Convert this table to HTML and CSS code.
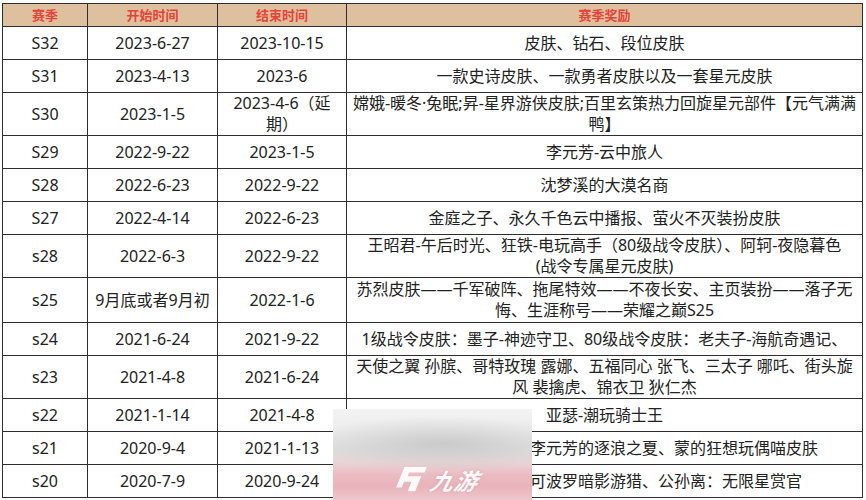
FILE: index.html
```html
<!DOCTYPE html>
<html lang="zh-CN">
<head>
<meta charset="utf-8">
<title>赛季时间表</title>
<link rel="stylesheet" href="styles.css">
</head>
<body>
<div class="page">
  <table class="seasons">
    <colgroup>
      <col class="c1"><col class="c2"><col class="c3"><col class="c4">
    </colgroup>
    <thead>
      <tr class="head"><th>赛季</th><th>开始时间</th><th>结束时间</th><th>赛季奖励</th></tr>
    </thead>
    <tbody>
      <tr><td>S32</td><td>2023-6-27</td><td>2023-10-15</td><td>皮肤、钻石、段位皮肤</td></tr>
      <tr><td>S31</td><td>2023-4-13</td><td>2023-6</td><td>一款史诗皮肤、一款勇者皮肤以及一套星元皮肤</td></tr>
      <tr class="two"><td>S30</td><td>2023-1-5</td><td>2023-4-6（延<br>期）</td><td>嫦娥-暖冬·兔眠;昇-星界游侠皮肤;百里玄策热力回旋星元部件【元气满满<br>鸭】</td></tr>
      <tr><td>S29</td><td>2022-9-22</td><td>2023-1-5</td><td>李元芳-云中旅人</td></tr>
      <tr><td>S28</td><td>2022-6-23</td><td>2022-9-22</td><td>沈梦溪的大漠名商</td></tr>
      <tr><td>S27</td><td>2022-4-14</td><td>2022-6-23</td><td>金庭之子、永久千色云中播报、萤火不灭装扮皮肤</td></tr>
      <tr class="two"><td>s28</td><td>2022-6-3</td><td>2022-9-22</td><td>王昭君-午后时光、狂铁-电玩高手（80级战令皮肤）、阿轲-夜隐暮色<br>(战令专属星元皮肤)</td></tr>
      <tr class="two tall"><td>s25</td><td>9月底或者9月初</td><td>2022-1-6</td><td>苏烈皮肤——千军破阵、拖尾特效——不夜长安、主页装扮——落子无<br>悔、生涯称号——荣耀之巅S25</td></tr>
      <tr><td>s24</td><td>2021-6-24</td><td>2021-9-22</td><td>1级战令皮肤：墨子-神迹守卫、80级战令皮肤：老夫子-海航奇遇记、</td></tr>
      <tr class="two"><td>s23</td><td>2021-4-8</td><td>2021-6-24</td><td>天使之翼 孙膑、哥特玫瑰 露娜、五福同心 张飞、三太子 哪吒、街头旋<br>风 裴擒虎、锦衣卫 狄仁杰</td></tr>
      <tr><td>s22</td><td>2021-1-14</td><td>2021-4-8</td><td>亚瑟-潮玩骑士王</td></tr>
      <tr><td>s21</td><td>2020-9-4</td><td>2021-1-13</td><td>S21赛季战令皮肤：李元芳的逐浪之夏、蒙的狂想玩偶喵皮肤</td></tr>
      <tr><td>s20</td><td>2020-7-9</td><td>2020-9-24</td><td><span class="hidden-red">S20战令皮肤：马</span>可波罗暗影游猎、公孙离：无限星赏官</td></tr>
    </tbody>
  </table>

  <div class="watermark">
    <div class="wm-logo">
      <svg class="wm-icon" viewBox="0 0 34 28" width="32" height="26" aria-hidden="true">
        <path d="M10 0 H34 L31.5 6 H15 L13.4 10 H28 L21.5 26 H13.5 L17.5 16 H9.5 L7 22 H1 Z" fill="#ffffff" fill-opacity="0.9"/>
      </svg>
      <span class="wm-text">九游</span>
    </div>
  </div>
</div>
</body>
</html>
```
FILE: styles.css
```css
html, body {
  margin: 0;
  padding: 0;
  background: #ffffff;
}

.page {
  position: relative;
  width: 866px;
  height: 500px;
  overflow: hidden;
  padding: 3px 0 0 2px;
  box-sizing: border-box;
  font-family: "Noto Sans", "Noto Sans CJK SC", sans-serif;
}

.seasons {
  border-collapse: collapse;
  table-layout: fixed;
  width: 860px;
  color: #222222;
  font-size: 16px;
  line-height: 20px;
}

.c1 { width: 85px; }
.c2 { width: 130px; }
.c3 { width: 129px; }
.c4 { width: 516px; }

.seasons th,
.seasons td {
  border: 1px solid #2e2e2e;
  text-align: center;
  vertical-align: middle;
  padding: 0 2px;
  white-space: nowrap;
  overflow: hidden;
}

.head th {
  height: 22px;
  background: #dfc09e;
  color: #e5433a;
  font-family: "Noto Sans CJK SC", sans-serif;
  font-size: 13px;
  font-weight: bold;
  line-height: 16px;
}

.seasons tbody td {
  height: 32px;
}

.seasons tbody tr.two td {
  height: 41px;
  line-height: 21px;
}

.seasons tbody tr.tall td {
  height: 44px;
}

.hidden-red {
  color: #d8262f;
}

.watermark {
  position: absolute;
  left: 333px;
  top: 409px;
  width: 199px;
  height: 91px;
  background:
    radial-gradient(ellipse 70% 30% at 55% 38%, rgba(196, 196, 196, 0.8), rgba(200, 200, 200, 0) 100%),
    linear-gradient(to bottom,
      #f3f3f3 0%,
      #ececec 25%,
      #e0e0e0 45%,
      #e8d6d8 58%,
      #ebbcc2 72%,
      #e9b3bb 85%,
      #eec7cc 100%);
  display: flex;
  align-items: flex-end;
  justify-content: center;
  padding-bottom: 7px;
  box-sizing: border-box;
}

.wm-logo {
  display: flex;
  align-items: center;
  gap: 4px;
  margin-left: 8px;
}

.wm-icon {
  display: block;
}

.wm-text {
  color: #ffffff;
  font-family: "Noto Sans CJK SC", sans-serif;
  font-size: 23px;
  font-weight: bold;
  font-style: italic;
  line-height: 26px;
  letter-spacing: 1px;
  transform: skewX(-14deg);
  text-shadow: 0 0 2px rgba(200, 120, 130, 0.5);
  opacity: 0.92;
}
```
